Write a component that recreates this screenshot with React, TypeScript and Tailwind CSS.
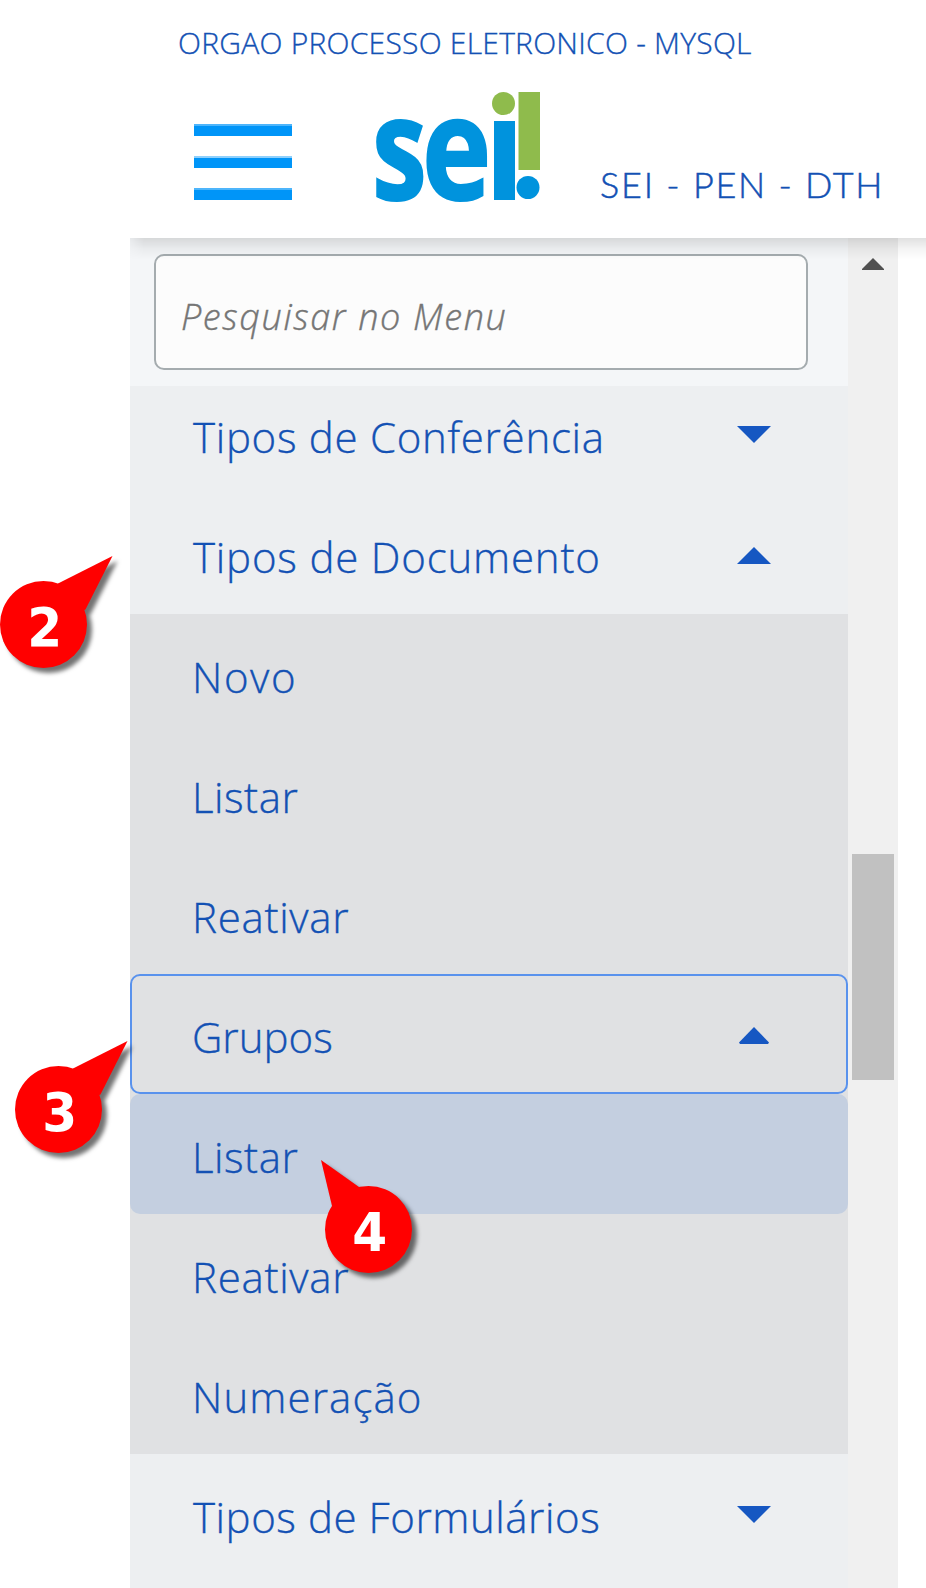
type Item = {
  label: string;
  tracking: string;
  arrow?: "up" | "down" | "upSmall";
  tone: string;
};

const base = "bg-[#edeff1]";
const sub = "bg-[#e0e1e3]";

const items: Item[] = [
  { label: "Tipos de Documento", tracking: "tracking-[0.8px]", arrow: "up", tone: base },
  { label: "Novo", tracking: "tracking-[1.6px]", tone: sub },
  { label: "Listar", tracking: "tracking-[0.5px]", tone: sub },
  { label: "Reativar", tracking: "tracking-[0.7px]", tone: sub },
  { label: "Grupos", tracking: "tracking-[0px]", arrow: "upSmall", tone: sub },
  { label: "Listar", tracking: "tracking-[0.5px]", tone: "active" },
  { label: "Reativar", tracking: "tracking-[0.7px]", tone: sub },
  { label: "Numeração", tracking: "tracking-[1.1px]", tone: sub },
  { label: "Tipos de Formulários", tracking: "tracking-[0.55px]", arrow: "down", tone: base },
];

function Arrow({ kind }: { kind: "up" | "down" | "upSmall" }) {
  const points =
    kind === "down" ? "0,1 34,1 17,18" : kind === "up" ? "0,19 17,2 34,19" : "2,17.5 17,2 32,17.5 31,19 3,19";
  return (
    <svg className="h-5 w-[34px]" viewBox="0 0 34 20" fill="#1657c2">
      <polygon points={points} />
    </svg>
  );
}

function Row({ label, tracking, arrow }: { label: string; tracking: string; arrow?: Item["arrow"] }) {
  const wide = label.startsWith("T");
  return (
    <div
      className={`flex h-full w-full items-center justify-between pt-[2px] pr-[77px] ${wide ? "pl-[63px]" : "pl-[62px]"}`}
    >
      <span className={`pt-1 text-[42px] leading-[60px] font-light whitespace-nowrap [-webkit-text-stroke:0.35px_#1351b4] ${tracking}`}>
        {label}
      </span>
      {arrow && <Arrow kind={arrow} />}
    </div>
  );
}

function Callout({ n, className, tail }: { n: string; className: string; tail: string }) {
  return (
    <div className={`absolute h-[87px] w-[87px] ${className}`}>
      <svg
        className="absolute inset-0 h-full w-full overflow-visible drop-shadow-[5px_5px_2px_rgba(0,0,0,0.55)]"
        viewBox="0 0 87 87"
        fill="#ff0000"
      >
        <circle cx="43.5" cy="43.5" r="43.5" />
        <polygon points={tail} />
      </svg>
      <div className="relative flex h-full items-center justify-center pt-[6px] pl-[2px] font-['DejaVu_Sans',sans-serif] text-[54px] leading-none font-bold text-white">
        <span className="scale-x-[0.93]">{n}</span>
      </div>
    </div>
  );
}

function Logo() {
  return (
    <svg className="h-[116px] w-[170px] overflow-visible" viewBox="372 90 170 116" fill="#0093dd">
      <text transform="translate(372 200) scale(0.77 1)" fontSize="143" fontWeight="700" stroke="#0093dd" strokeWidth="2">s</text>
      <text transform="translate(422 200) scale(0.82 1)" fontSize="143" fontWeight="700" stroke="#0093dd" strokeWidth="2">e</text>
      <rect x="494" y="121" width="21" height="79" />
      <circle cx="528" cy="187.5" r="11.5" />
      <circle cx="503.5" cy="103.5" r="11.5" fill="#8fbb4c" />
      <rect x="518.5" y="92" width="21.5" height="78" fill="#8fbb4c" />
    </svg>
  );
}

export default function App() {
  return (
    <div className="relative flex h-[1588px] w-[926px] flex-col overflow-hidden bg-white font-['Open_Sans',sans-serif] text-[#1351b4]">
      <header className="flex h-[238px] shrink-0 flex-col pt-[23px]">
        <div className="pl-[178px] text-[30px] leading-10 font-light tracking-[0.25px] whitespace-nowrap [-webkit-text-stroke:0.35px_#1351b4]">
          ORGAO PROCESSO ELETRONICO - MYSQL
        </div>
        <div className="flex pt-[27px] pl-[194px]">
          <div className="mt-[34px] flex w-[98px] flex-col gap-5">
            <span className="h-3 border-t-2 border-[#4db5fb] bg-[#0095f8]" />
            <span className="h-3 border-t-2 border-[#8fd0fc] bg-[#0095f8]" />
            <span className="h-3 border-t-2 border-[#4db5fb] bg-[#0095f8]" />
          </div>
          <div className="ml-20">
            <Logo />
          </div>
          <div className="mt-[74px] ml-[58px] font-[Lato,sans-serif] text-[36px] leading-10 font-light tracking-[1.75px] whitespace-nowrap [-webkit-text-stroke:0.5px_#1351b4]">
            SEI - PEN - DTH
          </div>
        </div>
      </header>

      <main className="flex h-[1350px] pl-[130px]">
        <nav className="flex w-[718px] flex-col overflow-hidden">
          <div className="h-[148px] shrink-0 bg-[#f4f6f8] px-6 pt-4">
            <div className="mr-4 flex h-[116px] items-center rounded-[10px] border-2 border-[#a5acaf] bg-[#fcfcfc] pt-[10px] pl-[25px]">
              <span className="text-[36px] leading-[50px] font-light tracking-[1.65px] whitespace-nowrap text-[#757575] italic [-webkit-text-stroke:0.4px_#757575]">
                Pesquisar no Menu
              </span>
            </div>
          </div>
          <div className="flex h-[108px] shrink-0 items-end bg-[#edeff1]">
            <div className="h-[120px] w-full">
              <Row label="Tipos de Conferência" tracking="tracking-[0.7px]" arrow="down" />
            </div>
          </div>
          {items.map((it, i) =>
            it.tone === "active" ? (
              <div key={i} className="h-[120px] shrink-0 bg-[#e0e1e3]">
                <div className="h-full rounded-[10px] bg-[#c4cfe0]">
                  <Row {...it} />
                </div>
              </div>
            ) : it.label === "Grupos" ? (
              <div key={i} className="h-[120px] shrink-0 bg-[#e0e1e3]">
                <div className="h-full rounded-[10px] inset-ring-2 inset-ring-[#5992ed]">
                  <Row {...it} />
                </div>
              </div>
            ) : (
              <div key={i} className={`shrink-0 ${i === 8 ? "h-[134px]" : "h-[120px]"} ${it.tone}`}>
                <div className="h-[120px]">
                  <Row {...it} />
                </div>
              </div>
            ),
          )}
        </nav>
        <div className="flex w-[50px] flex-col items-center bg-[#f0f0f0] pt-5">
          <svg className="h-3 w-[22px] shrink-0" viewBox="0 0 22 12" fill="#505050">
            <polygon points="11,0 22,11 22,12 0,12 0,11" />
          </svg>
          <div className="mt-[584px] h-[226px] w-[42px] shrink-0 bg-[#c1c1c1]" />
        </div>
      </main>

      <div className="pointer-events-none absolute top-[238px] right-0 left-[130px] h-[22px] bg-linear-to-b from-black/12 via-black/4 to-transparent [mask-image:linear-gradient(to_right,rgba(0,0,0,0.4),black_14px)]" />

      <Callout n="2" className="top-[581px] left-0" tail="58,2.5 112.5,-25 85.5,28.5 43,43" />
      <Callout n="3" className="top-[1066px] left-[15px]" tail="58,2.5 112.5,-25 85.5,28.5 43,43" />
      <Callout n="4" className="top-[1186px] left-[325px]" tail="34,1 -4,-26 7,20 43,43" />
    </div>
  );
}
